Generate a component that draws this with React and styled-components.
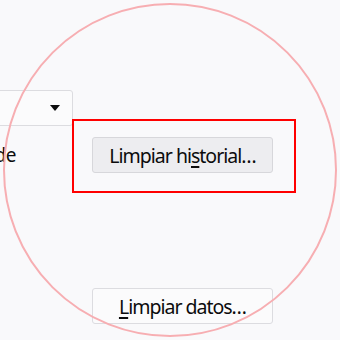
import React from 'react'
import styled, { createGlobalStyle } from 'styled-components'

const Global = createGlobalStyle`
  html, body { margin: 0; padding: 0; background: #f9f9fb; }
  body { font-family: "Noto Sans", "Open Sans", "DejaVu Sans", sans-serif; }
`

export default function App() {
  return (
    <Page>
      <Global />
      <Dropdown>
        <Arrow />
      </Dropdown>
      <Row>
        <Label>Cookies y datos de</Label>
        <Highlight>
          <Button>Limpiar hi<u>s</u>torial…</Button>
        </Highlight>
      </Row>
      <Footer>
        <Button $plain><u>L</u>impiar datos…</Button>
      </Footer>
      <Ring />
    </Page>
  )
}

const Page = styled.div`
  position: relative;
  width: 340px;
  height: 340px;
  overflow: hidden;
  background: #f9f9fb;
  display: flex;
  flex-direction: column;
`
const Dropdown = styled.div`
  margin-top: 90px;
  margin-left: -40px;
  width: 113px;
  height: 36px;
  box-sizing: border-box;
  border: 1px solid #dcdce0;
  border-radius: 3px;
  background: #fbfbfc;
  display: flex;
  align-items: center;
  justify-content: flex-end;
  padding-right: 12px;
`
const Arrow = styled.span`
  width: 0;
  height: 0;
  border-left: 5px solid transparent;
  border-right: 5px solid transparent;
  border-top: 6px solid #0c0c0d;
`
const Row = styled.div`
  display: flex;
  margin-top: -7px;
  margin-left: -140px;
`
const Label = styled.div`
  width: 160px;
  margin-right: 52px;
  padding-top: 23px;
  font-size: 19px;
  letter-spacing: -0.6px;
  color: #0c0c0d;
  white-space: nowrap;
  overflow: hidden;
  direction: rtl;
  text-align: left;
`
const Highlight = styled.div`
  width: 224px;
  height: 74px;
  box-sizing: border-box;
  border: 2px solid #ff0000;
  padding: 16px 0 0 18px;
`
const Button = styled.div`
  width: 181px;
  height: 36px;
  box-sizing: border-box;
  border: 1px solid ${p => (p.$plain ? '#dcdce0' : '#d7d7db')};
  border-radius: 3px;
  background: ${p => (p.$plain ? '#fbfbfc' : '#ededf0')};
  color: #0c0c0d;
  font-size: 19.5px;
  letter-spacing: -1px;
  display: flex;
  align-items: center;
  justify-content: center;
  white-space: nowrap;
  u { text-decoration-thickness: 1.5px; text-underline-offset: 3px; }
`
const Footer = styled.div`
  margin-top: 95px;
  margin-left: 92px;
`
const Ring = styled.div`
  position: absolute;
  left: 3px;
  top: 3px;
  width: 334px;
  height: 334px;
  box-sizing: border-box;
  border: 2.5px solid #f7aeb2;
  border-radius: 50%;
  pointer-events: none;
`
